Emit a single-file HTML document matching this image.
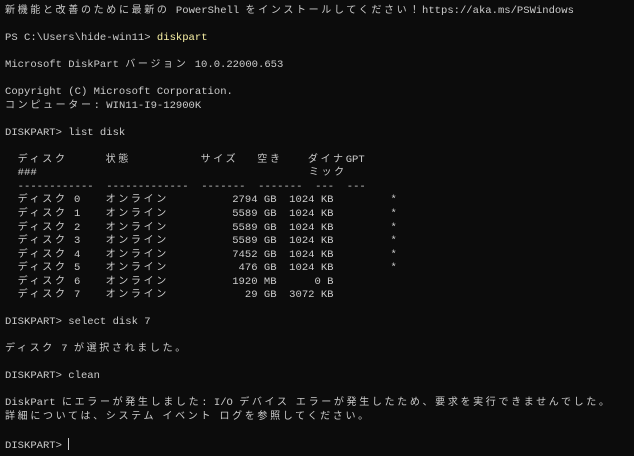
<!DOCTYPE html>
<html><head><meta charset="utf-8"><style>
html,body{margin:0;padding:0;background:#0c0c0c;width:634px;height:456px;overflow:hidden}
pre{margin:0;position:absolute;left:5px;top:5px;font-family:"Liberation Mono",monospace;font-size:10.55px;line-height:13.53px;color:#cccccc;white-space:pre}
.j{font-family:"Noto Sans CJK JP",sans-serif;letter-spacing:2.66px;font-size:10px;line-height:1px;vertical-align:baseline}
.y{color:#f9f1a5}
.c{display:inline-block;width:1px;height:12px;background:#cccccc;vertical-align:-2px;line-height:1px}
</style></head><body>
<pre><span class="j">新機能と改善のために最新の</span> PowerShell <span class="j">をインストールしてください！</span>https://aka.ms/PSWindows

PS C:\Users\hide-win11> <span class="y">diskpart</span>

Microsoft DiskPart <span class="j">バージョン</span> 10.0.22000.653

Copyright (C) Microsoft Corporation.
<span class="j">コンピューター</span>: WIN11-I9-12900K

DISKPART&gt; list disk

  <span class="j">ディスク</span>      <span class="j">状態</span>           <span class="j">サイズ</span>   <span class="j">空き</span>    <span class="j">ダイナ</span>GPT
  ###                                           <span class="j">ミック</span>
  ------------  -------------  -------  -------  ---  ---
  <span class="j">ディスク</span> 0    <span class="j">オンライン</span>          2794 GB  1024 KB         *
  <span class="j">ディスク</span> 1    <span class="j">オンライン</span>          5589 GB  1024 KB         *
  <span class="j">ディスク</span> 2    <span class="j">オンライン</span>          5589 GB  1024 KB         *
  <span class="j">ディスク</span> 3    <span class="j">オンライン</span>          5589 GB  1024 KB         *
  <span class="j">ディスク</span> 4    <span class="j">オンライン</span>          7452 GB  1024 KB         *
  <span class="j">ディスク</span> 5    <span class="j">オンライン</span>           476 GB  1024 KB         *
  <span class="j">ディスク</span> 6    <span class="j">オンライン</span>          1920 MB      0 B
  <span class="j">ディスク</span> 7    <span class="j">オンライン</span>            29 GB  3072 KB

DISKPART&gt; select disk 7

<span class="j">ディスク</span> 7 <span class="j">が選択されました。</span>

DISKPART&gt; clean

DiskPart <span class="j">にエラーが発生しました</span>: I/O <span class="j">デバイス</span> <span class="j">エラーが発生したため、要求を実行できませんでした。</span>
<span class="j">詳細については、システム</span> <span class="j">イベント</span> <span class="j">ログを参照してください。</span>

DISKPART&gt; <span class="c"></span></pre>
</body></html>
